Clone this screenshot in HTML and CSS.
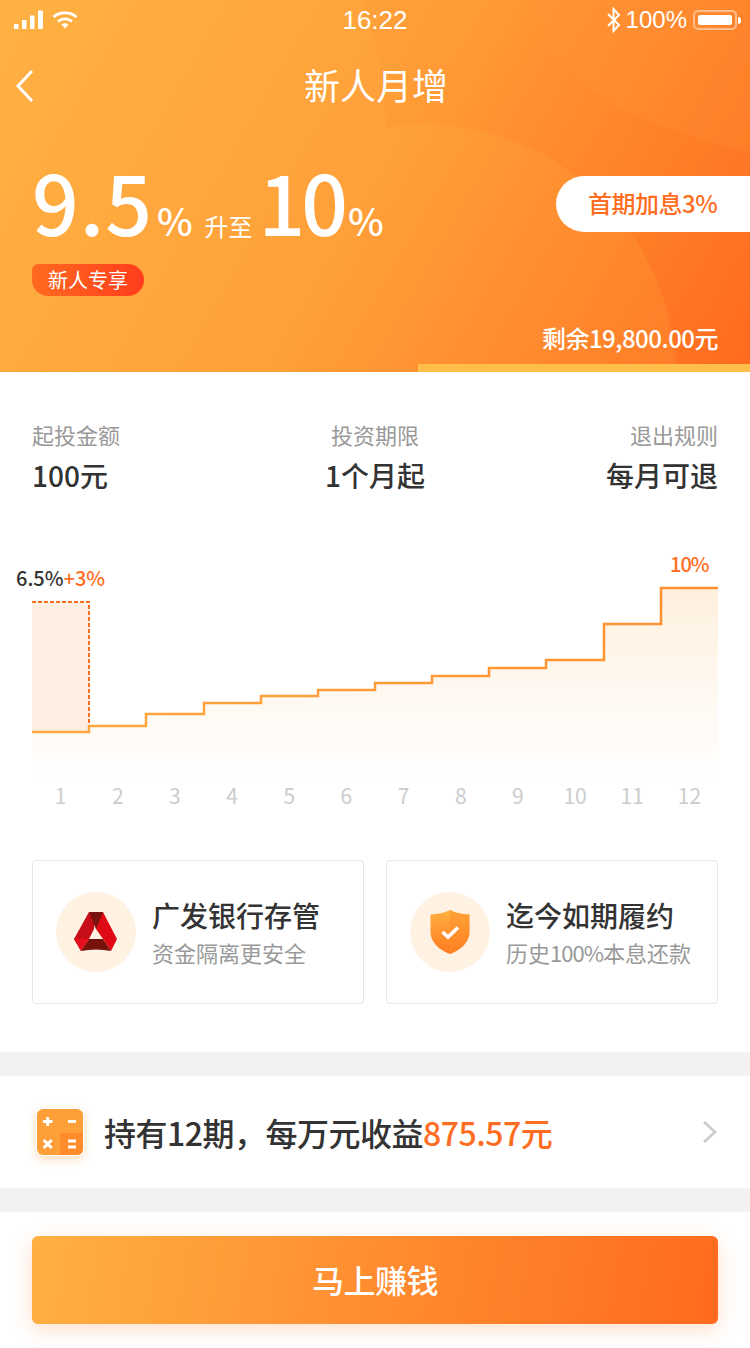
FILE: index.html
```html
<!DOCTYPE html>
<html lang="zh-CN">
<head>
  <meta charset="UTF-8">
  <meta name="viewport" content="width=device-width, initial-scale=1.0">
  <title>新人月增</title>
  <link rel="stylesheet" href="styles.css">
</head>
<body>
  <header class="hero">
    <svg class="hero-shapes" viewBox="0 0 750 372" aria-hidden="true">
      <path d="M0 0H362C378 46 386 88 386 128C396 125 408 124 420 124C560 124 670 230 677 372H0Z" fill="#ffb84d" fill-opacity="0.16"/>
      <path d="M540 0C545 60 590 115 750 152V0Z" fill="#ff9a3a" fill-opacity="0.2"/>
    </svg>

    <div class="status-bar">
      <div class="status-left">
        <svg width="30" height="20" viewBox="0 0 30 20">
          <rect x="0" y="14" width="4.5" height="5" fill="#fff"/>
          <rect x="8" y="10" width="4.5" height="9" fill="#fff"/>
          <rect x="16" y="5.5" width="4.5" height="13.5" fill="#fff"/>
          <rect x="24" y="0.5" width="5" height="18.5" fill="#fff"/>
        </svg>
        <svg width="26" height="20" viewBox="0 0 26 20">
          <path d="M1.5 7C7.5 1.5 18.500 1.5 24.500 7" fill="none" stroke="#fff" stroke-width="2.600"/>
          <path d="M6 11.500C10 8 16 8 20 11.500" fill="none" stroke="#fff" stroke-width="2.600"/>
          <path d="M9.500 14.500C11.500 12.800 14.500 12.800 16.500 14.500L13 18.500Z" fill="#fff"/>
        </svg>
      </div>
      <div class="status-time">16:22</div>
      <div class="status-right">
        <svg width="16" height="28" viewBox="0 0 16 28">
          <path d="M2 8L13 19L7.500 25V3L13 9L2 20" fill="none" stroke="#fff" stroke-width="2"/>
        </svg>
        <span class="battery-text">100%</span>
        <span class="battery"><span class="battery-level"></span></span>
        <span class="battery-tip"></span>
      </div>
    </div>

    <nav class="nav">
      <svg class="back" width="20" height="34" viewBox="0 0 20 34">
        <path d="M17 2L3 17L17 32" fill="none" stroke="#fff" stroke-width="3"/>
      </svg>
      <h1>新人月增</h1>
    </nav>

    <div class="rate-row">
      <div class="rate">
        <span class="rate-num rate-num-old">9.5</span><span class="rate-pct">%</span>
        <span class="rate-to">升至</span>
        <span class="rate-num">10</span><span class="rate-pct">%</span>
      </div>
      <div class="bonus">首期加息3%</div>
    </div>
    <div class="tag">新人专享</div>
    <div class="remain">剩余19,800.00元</div>
    <div class="progress"></div>
  </header>

  <section class="terms">
    <div class="term">
      <div class="term-label">起投金额</div>
      <div class="term-value">100元</div>
    </div>
    <div class="term term-center">
      <div class="term-label">投资期限</div>
      <div class="term-value">1个月起</div>
    </div>
    <div class="term term-right">
      <div class="term-label">退出规则</div>
      <div class="term-value">每月可退</div>
    </div>
  </section>

  <section class="chart">
    <svg class="chart-svg" width="750" height="240" viewBox="0 545 750 240">
      <defs>
        <linearGradient id="area" x1="0" y1="0" x2="0" y2="1">
          <stop offset="0" stop-color="#fff0de"/>
          <stop offset="0.5" stop-color="#fff8f0"/>
          <stop offset="1" stop-color="#ffffff"/>
        </linearGradient>
        <linearGradient id="line" x1="0" y1="0" x2="1" y2="0">
          <stop offset="0" stop-color="#ffa940"/>
          <stop offset="1" stop-color="#ff8f30"/>
        </linearGradient>
      </defs>
      <path d="M32 732H89V726H146V714H204V703H261V696H318V690H375V683H432V676H489V668H546V660H604V624H661V588H718V785H32Z" fill="url(#area)"/>
      <rect x="32" y="602" width="57" height="130" fill="#fdeee4"/>
      <path d="M32 602H89V732" fill="none" stroke="#ff6d22" stroke-width="2" stroke-dasharray="4 2"/>
      <path d="M32 732H89V726H146V714H204V703H261V696H318V690H375V683H432V676H489V668H546V660H604V624H661V588H718" fill="none" stroke="url(#line)" stroke-width="2.500"/>
      <text class="chart-note" x="16" y="586">6.5%<tspan class="chart-note-hot">+3%</tspan></text>
      <text class="chart-note chart-note-hot chart-note-top" x="670" y="572">10%</text>
    </svg>
    <div class="axis">
      <span>1</span><span>2</span><span>3</span><span>4</span><span>5</span><span>6</span>
      <span>7</span><span>8</span><span>9</span><span>10</span><span>11</span><span>12</span>
    </div>
  </section>

  <section class="cards">
    <div class="card">
      <div class="card-icon">
        <svg width="44" height="40" viewBox="0 0 44 40">
          <path d="M15 0H22L20 17L15 27L7 39L0 27Z" fill="#c70d17"/>
          <path d="M22 0H29L43 27L37 39L29 27L22 17Z" fill="#e00a16"/>
          <path d="M15 0H29L22 17Z" fill="#7a1410"/>
          <path d="M15 27H29L37 39C27 37 17 37 7 39Z" fill="#78120c"/>
          <path d="M0 27L15 27L7 39Z" fill="#e30f1c"/>
        </svg>
      </div>
      <div class="card-body">
        <div class="card-title">广发银行存管</div>
        <div class="card-sub">资金隔离更安全</div>
      </div>
    </div>
    <div class="card">
      <div class="card-icon">
        <svg width="40" height="46" viewBox="0 0 40 46">
          <defs>
            <linearGradient id="shield" x1="0" y1="0" x2="0" y2="1">
              <stop offset="0" stop-color="#ffb040"/>
              <stop offset="1" stop-color="#ff7a20"/>
            </linearGradient>
          </defs>
          <path d="M20 1C26 4 32 5 39.500 5.500V23C39.500 33 31 41 20 45C9 41 0.500 33 0.500 23V5.500C8 5 14 4 20 1Z" fill="url(#shield)"/>
          <path d="M20 1C26 4 32 5 39.500 5.500V23C39.500 33 31 41 20 45Z" fill="#ff8a26" fill-opacity="0.35"/>
          <path d="M12.500 23L18 28L28 18.500" fill="none" stroke="#fff" stroke-width="3.500"/>
        </svg>
      </div>
      <div class="card-body">
        <div class="card-title">迄今如期履约</div>
        <div class="card-sub">历史<span class="card-sub-num">100%</span>本息还款</div>
      </div>
    </div>
  </section>

  <section class="income">
    <svg class="calc" width="48" height="48" viewBox="0 0 48 48">
      <rect x="1" y="1" width="46" height="46" rx="6" fill="#ff9f38"/>
      <path d="M24 25H47V41A6 6 0 0 1 41 47H24Z" fill="#ff8c2a"/>
      <path d="M7 13.500H16.500M11.700 9V18M32 13.500H40M7.700 32L15.700 40M15.700 32L7.700 40M32 33H40M32 39H40" fill="none" stroke="#fff" stroke-width="3"/>
    </svg>
    <div class="income-text">持有12期，每万元收益<span class="income-num">875.57元</span></div>
    <svg class="chevron" width="16" height="24" viewBox="0 0 16 24">
      <path d="M2 2L13 12L2 22" fill="none" stroke="#cfcfcf" stroke-width="3"/>
    </svg>
  </section>

  <footer class="footer">
    <button class="buy" type="button">马上赚钱</button>
  </footer>
</body>
</html>
```

FILE: styles.css
```css
* {
  box-sizing: border-box;
}

body {
  margin: 0;
  width: 750px;
  background-color: #fff;
  color: #333;
  font-family: "Noto Sans CJK SC", sans-serif;
}

h1 {
  margin: 0;
  font-size: 36px;
  font-weight: 400;
}

.hero {
  position: relative;
  height: 372px;
  overflow: hidden;
  color: #fff;
  background: linear-gradient(120deg, #ffb043 0%, #ff9b36 50%, #ff6a1e 100%);
}

.hero-shapes {
  position: absolute;
  top: 0;
  left: 0;
  width: 750px;
  height: 372px;
}

.status-bar {
  position: relative;
  display: flex;
  justify-content: space-between;
  align-items: center;
  height: 40px;
  padding: 0 9px 0 14px;
}

.status-left {
  display: flex;
  align-items: center;
  gap: 8px;
  width: 285px;
}

.status-time {
  font-family: "Liberation Sans", sans-serif;
  font-size: 26px;
}

.status-right {
  display: flex;
  align-items: center;
  justify-content: flex-end;
  width: 290px;
  gap: 4px;
}

.battery-text {
  font-family: "Liberation Sans", sans-serif;
  font-size: 24px;
  margin-right: 2px;
}

.battery {
  display: block;
  width: 44px;
  height: 20px;
  padding: 3px;
  border: 2px solid rgba(255, 255, 255, 0.45);
  border-radius: 5px;
}

.battery-level {
  display: block;
  height: 100%;
  background-color: #fff;
  border-radius: 2px;
}

.battery-tip {
  width: 3px;
  height: 7px;
  margin-left: -3px;
  background-color: #fff;
  border-radius: 0 3px 3px 0;
}

.nav {
  position: relative;
  display: flex;
  justify-content: center;
  align-items: center;
  height: 88px;
  padding-left: 2px;
}

.back {
  position: absolute;
  left: 15px;
  top: 29px;
}

.rate-row {
  position: relative;
  display: flex;
  justify-content: space-between;
  align-items: flex-start;
  height: 132px;
  margin-top: 44px;
  padding-left: 32px;
}

.rate {
  display: flex;
  align-items: baseline;
  height: 108px;
  margin-top: -25px;
}

.rate-num {
  font-size: 82px;
  font-weight: 500;
  line-height: 108px;
  letter-spacing: -4px;
}

.rate-num-old {
  letter-spacing: 1px;
}

.rate-pct {
  margin-left: 4px;
  font-size: 38px;
  font-weight: 500;
}

.rate-to {
  margin: 0 6px 0 12px;
  font-size: 24px;
}

.bonus {
  width: 194px;
  height: 56px;
  margin-top: 4px;
  padding-left: 32px;
  background-color: #fff;
  border-radius: 28px 0 0 28px;
  color: #ff6d22;
  font-size: 24px;
  font-weight: 500;
  letter-spacing: -0.5px;
  line-height: 54px;
}

.tag {
  position: relative;
  width: 112px;
  height: 32px;
  margin-top: -40px;
  margin-left: 32px;
  background: linear-gradient(90deg, #ff6a20, #ff3d1c);
  border-radius: 6px 16px 16px 16px;
  font-size: 20px;
  line-height: 32px;
  text-align: center;
}

.remain {
  position: absolute;
  right: 32px;
  bottom: 18px;
  font-size: 24px;
  font-weight: 500;
  letter-spacing: -0.5px;
  line-height: 32px;
}

.progress {
  position: absolute;
  right: 0;
  bottom: 0;
  width: 332px;
  height: 8px;
  background-color: #ffbd4a;
}

.terms {
  display: flex;
  padding: 46px 32px 0;
}

.term {
  flex: 1;
}

.term-center {
  text-align: center;
}

.term-right {
  text-align: right;
}

.term-label {
  color: #999;
  font-size: 22px;
  line-height: 32px;
}

.term-value {
  margin-top: 5px;
  color: #333;
  font-size: 28px;
  font-weight: 500;
  line-height: 40px;
}

.chart {
  margin-top: 50px;
}

.chart-svg {
  display: block;
}

.chart-note {
  fill: #333;
  font-size: 20px;
  font-weight: 500;
}

.chart-note-hot {
  fill: #ff6d22;
}

.chart-note-top {
  letter-spacing: -1px;
}

.axis {
  display: grid;
  grid-template-columns: repeat(12, 1fr);
  margin-top: -3px;
  padding: 0 32px;
  color: #ccc;
  font-size: 21px;
  line-height: 26px;
  text-align: center;
}

.cards {
  display: flex;
  justify-content: space-between;
  margin-top: 52px;
  padding: 0 32px;
}

.card {
  display: flex;
  align-items: center;
  gap: 16px;
  width: 332px;
  height: 144px;
  padding-left: 23px;
  border: 1px solid #e5e5e5;
  border-radius: 4px;
}

.card-icon {
  display: flex;
  justify-content: center;
  align-items: center;
  flex: none;
  width: 80px;
  height: 80px;
  background-color: #fff2e3;
  border-radius: 50%;
}

.card-body {
  padding-top: 1px;
}

.card-title {
  color: #333;
  font-size: 28px;
  font-weight: 500;
  line-height: 40px;
}

.card-sub {
  margin-top: -1px;
  color: #999;
  font-size: 22px;
  line-height: 36px;
}

.card-sub-num {
  letter-spacing: -1px;
}

.income {
  position: relative;
  display: flex;
  align-items: center;
  height: 160px;
  margin-top: 48px;
  padding: 0 32px 0 36px;
  border-top: 24px solid #f2f2f2;
  border-bottom: 24px solid #f2f2f2;
}

.calc {
  flex: none;
  border-radius: 6px;
  box-shadow: 0 3px 8px rgba(255, 150, 50, 0.35);
}

.income-text {
  flex: 1;
  margin-left: 20px;
  color: #333;
  font-size: 32px;
  font-weight: 500;
  letter-spacing: -0.5px;
  line-height: 44px;
}

.income-num {
  color: #ff6d22;
  letter-spacing: -0.5px;
}

.footer {
  padding: 24px 32px;
}

.buy {
  display: block;
  width: 100%;
  height: 88px;
  padding: 0 0 2px;
  border: none;
  border-radius: 6px;
  background: linear-gradient(100deg, #ffb043, #ff6a1e);
  box-shadow: 0 6px 20px rgba(255, 130, 50, 0.25);
  color: #fff;
  font-family: inherit;
  font-size: 32px;
  font-weight: 500;
  letter-spacing: -0.5px;
}
```
